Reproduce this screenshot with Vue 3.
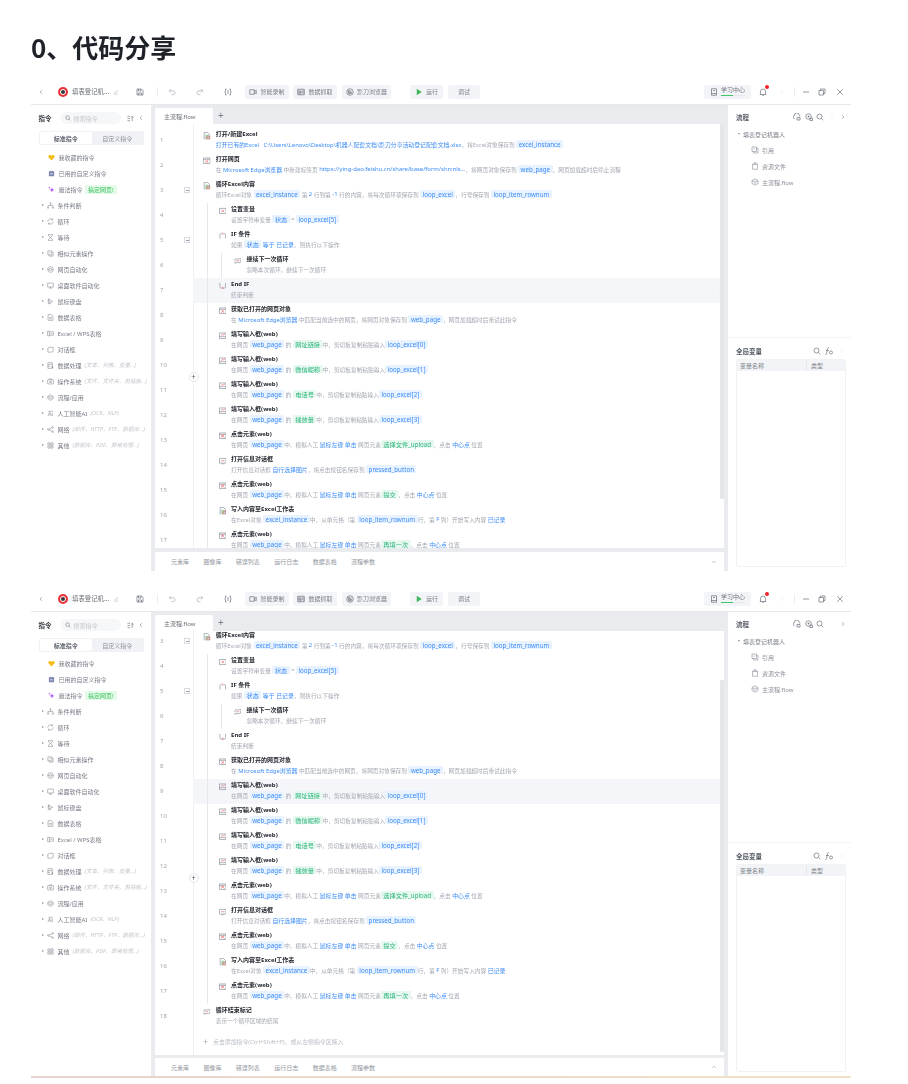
<script setup>
const v = (t) => ({ t, c: 'v' })
const s = (t) => ({ t, c: 's' })
const k = (t) => ({ t, c: 'k' })
const p = (t) => ({ t, c: 'k small' })

const fill = (key, url) => [
  '在网页 ', v('web_page'), ' 的 ', s(key), '中，剪切板复制粘贴输入', v(url),
]
const click = (el) => [
  '在网页 ', v('web_page'), '中，模拟人工 ', k('鼠标左键 单击'), ' 网页元素', s(el), '，点击 ', k('中心点'), ' 位置',
]

const rows = [
  { n: 1, lv: 0, i: 'r-xl', t: '打开/新建Excel', d: [p('打开已有的Excel   C:\\Users\\Lenovo\\Desktop\\机器人配套文档\\影刀分享活动登记配套文档.xlsx'), '，将Excel对象保存到 ', v('excel_instance')] },
  { n: 2, lv: 0, i: 'r-web', t: '打开网页', d: ['在 ', k('Microsoft Edge浏览器'), ' 中新建标签页 ', k('https://ying-dao.feishu.cn/share/base/form/shrcnls...'), '，将网页对象保存到 ', v('web_page'), '，网页加载超时后停止流程'] },
  { n: 3, lv: 0, i: 'r-xl', t: '循环Excel内容', fold: true, d: ['循环Excel对象 ', v('excel_instance'), ' 第 ', k('2'), ' 行到第 ', k('-1'), ' 行的内容，将每次循环项保存到 ', v('loop_excel'), '，行号保存到 ', v('loop_item_rownum')] },
  { n: 4, lv: 1, i: 'r-var', t: '设置变量', d: ['设置字符串变量 ', v('状态'), ' = ', v('loop_excel[5]')] },
  { n: 5, lv: 1, i: 'r-if', t: 'IF 条件', fold: true, d: ['如果 ', v('状态'), k(' 等于 已记录'), '，则执行以下操作'] },
  { n: 6, lv: 2, i: 'r-loop', t: '继续下一次循环', d: ['忽略本次循环，继续下一次循环'] },
  { n: 7, lv: 1, i: 'r-endif', t: 'End IF', d: ['结束判断'] },
  { n: 8, lv: 1, i: 'r-web', t: '获取已打开的网页对象', d: ['在 ', k('Microsoft Edge浏览器'), ' 中匹配当前选中的网页，将网页对象保存到 ', v('web_page'), '，网页加载超时后重试此指令'] },
  { n: 9, lv: 1, i: 'r-input', t: '填写输入框(web)', d: fill('网址链接', 'loop_excel[0]') },
  { n: 10, lv: 1, i: 'r-input', t: '填写输入框(web)', d: fill('微信昵称', 'loop_excel[1]') },
  { n: 11, lv: 1, i: 'r-input', t: '填写输入框(web)', d: fill('电话号', 'loop_excel[2]') },
  { n: 12, lv: 1, i: 'r-input', t: '填写输入框(web)', d: fill('播放量', 'loop_excel[3]') },
  { n: 13, lv: 1, i: 'r-click', t: '点击元素(web)', d: click('选择文件_upload') },
  { n: 14, lv: 1, i: 'r-msg', t: '打开信息对话框', d: ['打开信息对话框 ', k('自行选择图片'), '，将点击按钮名保存到 ', v('pressed_button')] },
  { n: 15, lv: 1, i: 'r-click', t: '点击元素(web)', d: click('提交') },
  { n: 16, lv: 1, i: 'r-xl', t: '写入内容至Excel工作表', d: ['在Excel对象 ', v('excel_instance'), '中，从单元格（第 ', v('loop_item_rownum'), '行，第 ', k('F'), ' 列）开始写入内容 ', k('已记录')] },
  { n: 17, lv: 1, i: 'r-click', t: '点击元素(web)', d: click('再填一次') },
  { n: 18, lv: 0, i: 'r-loop', t: '循环结束标记', d: ['表示一个循环区域的结尾'] },
]

const shots = [
  { id: 'one', rows: rows.slice(0, 17), hot: 7, add: false },
  { id: 'two', rows: rows.slice(2), hot: 9, add: true },
]

const groups = [
  { i: 's-branch', t: '条件判断' },
  { i: 's-loop', t: '循环' },
  { i: 's-wait', t: '等待' },
  { i: 's-copy', t: '相似元素操作' },
  { i: 's-globe', t: '网页自动化' },
  { i: 's-screen', t: '桌面软件自动化' },
  { i: 's-mouse', t: '鼠标键盘' },
  { i: 's-sheet', t: '数据表格' },
  { i: 's-xl', t: 'Excel / WPS表格' },
  { i: 's-dialog', t: '对话框' },
  { i: 's-data', t: '数据处理', h: '(文本、列表、变量...)' },
  { i: 's-os', t: '操作系统', h: '(文件、文件夹、剪贴板...)' },
  { i: 's-flow', t: '流程/应用' },
  { i: 's-ai', t: '人工智能AI', h: '(OCR、NLP)' },
  { i: 's-net', t: '网络', h: '(邮件、HTTP、FTP、数据库...)' },
  { i: 's-grid', t: '其他', h: '(数据库、PDF、异常处理...)' },
]
const bottomTabs = ['元素库', '图像库', '错误列表', '运行日志', '数据表格', '流程参数']
const tree = [
  { i: 's-copy', t: '引用' },
  { i: 's-file', t: '资源文件' },
  { i: 's-flow', t: '主流程.flow' },
]
</script>

<template>
  <div class="page">
    <svg class="defs" aria-hidden="true">
      <symbol id="back" viewBox="0 0 16 16"><path d="M10.5 3 5.5 8l5 5" /></symbol>
      <symbol id="next" viewBox="0 0 16 16"><path d="M5.5 3l5 5-5 5" /></symbol>
      <symbol id="edit" viewBox="0 0 16 16"><path d="M2 14h12M4 11l7-7 2 2-7 6z" /></symbol>
      <symbol id="save" viewBox="0 0 16 16"><path d="M2 2h9l3 3v9H2zM5 2v4h5V2M5 14v-4h6v4" /></symbol>
      <symbol id="undo" viewBox="0 0 16 16"><path d="M6 2 2.5 5.500 6 9M2.500 5.500H10a3.500 3.500 0 0 1 0 8H7" /></symbol>
      <symbol id="redo" viewBox="0 0 16 16"><path d="M10 2l3.500 3.500L10 9M13.500 5.500H6a3.500 3.500 0 0 0 0 8h3" /></symbol>
      <symbol id="debug" viewBox="0 0 16 16"><path d="M5 2H3v4L1.500 8 3 10v4h2M11 2h2v4l1.500 2L13 10v4h-2M6 6h4M6 10h4" /></symbol>
      <symbol id="rec" viewBox="0 0 16 16"><path d="M1.500 3.500h9v9h-9zM10.500 7l4-2.500v7l-4-2.500" /></symbol>
      <symbol id="table" viewBox="0 0 16 16"><path d="M1.500 2.500h13v11h-13zM1.500 6h13M1.500 9.700h13M6 6v7.500" /></symbol>
      <symbol id="browser" viewBox="0 0 16 16"><circle cx="8" cy="8" r="6.500" /><path d="M8 4.500a3.500 3.500 0 1 0 3.500 3.500M5 5l5 6M11 5l-5 6" /></symbol>
      <symbol id="play" viewBox="0 0 16 16"><path class="solid" d="M3.500 1.500 13.500 8l-10 6.500z" /></symbol>
      <symbol id="book" viewBox="0 0 16 16"><path d="M3 1.500h10v13H3zM6 5h4M3 11h10" /></symbol>
      <symbol id="bell" viewBox="0 0 16 16"><path d="M3 12V7a5 5 0 0 1 10 0v5l1 1H2zM6.500 15h3" /></symbol>
      <symbol id="vdots" viewBox="0 0 16 16"><path class="thick" d="M8 2v1M8 7.500v1M8 13v1" /></symbol>
      <symbol id="min" viewBox="0 0 16 16"><path d="M2 8h12" /></symbol>
      <symbol id="max" viewBox="0 0 16 16"><path d="M2 5h9v9H2zM5 5V2h9v9h-3" /></symbol>
      <symbol id="close" viewBox="0 0 16 16"><path d="M2.500 2.500l11 11M13.500 2.500l-11 11" /></symbol>
      <symbol id="search" viewBox="0 0 16 16"><circle cx="7" cy="7" r="5" /><path d="M11 11l3.500 3.500" /></symbol>
      <symbol id="sort" viewBox="0 0 16 16"><path d="M1 3h6M1 8h6M1 13h6M12 14V3M9 6l3-3 3 3" /></symbol>
      <symbol id="fx" viewBox="0 0 16 16"><path d="M1 15c3 0 2-2 3-7s1-7 4-7M2 7h6" /><circle cx="12" cy="11" r="3" /></symbol>
      <symbol id="cloud-a" viewBox="0 0 16 16"><path d="M3 11a3 3 0 0 1 0-6 4.500 4.500 0 0 1 9-1 3 3 0 0 1 2 3M8 9h6v5H8z" /></symbol>
      <symbol id="cloud-b" viewBox="0 0 16 16"><circle cx="7" cy="7" r="5.500" /><path d="M5 7h4M7 5v4M10 10h5v5h-5z" /></symbol>
      <symbol id="heart" viewBox="0 0 16 16"><path class="solid" d="M8 15 1.500 8C-.500 5 1.500 2 4.500 2 6 2 7.300 2.800 8 4c.7-1.200 2-2 3.500-2 3 0 5 3 3 6z" /></symbol>
      <symbol id="cal" viewBox="0 0 16 16"><path class="solid" d="M2 3h3V1.500h1.500V3h3V1.500H11V3h3v11.500H2zM5 8v1.500h6V8z" /></symbol>
      <symbol id="spark" viewBox="0 0 16 16"><path class="solid" d="M9 3l1.500 4.500L15 9l-4.500 1.500L9 15l-1.500-4.500L3 9l4.500-1.500zM3 1l.8 2.200L6 4l-2.200.8L3 7l-.8-2.200L0 4l2.200-.8z" /></symbol>
      <symbol id="s-branch" viewBox="0 0 16 16"><circle cx="8" cy="3" r="1.500" /><circle cx="2.500" cy="13" r="1.500" /><circle cx="13.500" cy="13" r="1.500" /><path d="M8 4.500V8H2.500v3.500M8 8h5.500v3.500" /></symbol>
      <symbol id="s-loop" viewBox="0 0 16 16"><path d="M2 8a6 6 0 0 1 10.500-4M14 8a6 6 0 0 1-10.500 4M12.500 1v3h-3M3.500 15v-3h3" /></symbol>
      <symbol id="s-wait" viewBox="0 0 16 16"><path d="M2.500 1.500h11M2.500 14.500h11M3.500 1.500v2.500L12.500 12v2.500M12.500 1.500V4L3.500 12v2.500" /></symbol>
      <symbol id="s-copy" viewBox="0 0 16 16"><path d="M2 2h9v9H2zM5 11v3h9V5h-3M5 6h3" /></symbol>
      <symbol id="s-globe" viewBox="0 0 16 16"><circle cx="8" cy="8" r="6.500" /><circle cx="8" cy="8" r="2.500" /><path d="M2 8h3.500M10.500 8H14" /></symbol>
      <symbol id="s-screen" viewBox="0 0 16 16"><path d="M1.500 2.500h13v9h-13zM5 14h6M8 11.500V14" /></symbol>
      <symbol id="s-mouse" viewBox="0 0 16 16"><path d="M3 2l10 6-4 1-2 4zM3 2v11h4" /></symbol>
      <symbol id="s-sheet" viewBox="0 0 16 16"><path d="M2.500 1.500h8l3 3v10h-11zM5 8h6M5 11h6" /></symbol>
      <symbol id="s-xl" viewBox="0 0 16 16"><path d="M1.500 2.500h4v11h-4zM5.500 4h9v8h-9M8 8h4" /></symbol>
      <symbol id="s-dialog" viewBox="0 0 16 16"><path d="M3 3h11v8a3 3 0 0 1-3 3H2V5M1.500 6h2" /></symbol>
      <symbol id="s-data" viewBox="0 0 16 16"><path d="M2 1.500h10v13H2zM2 6h10M2 10h5M10 12h5M12.500 9.500v5" /></symbol>
      <symbol id="s-os" viewBox="0 0 16 16"><path d="M1.500 4h13v9.500h-13zM5 4V2h6v2M6 8h4v2H6z" /></symbol>
      <symbol id="s-flow" viewBox="0 0 16 16"><path d="M8 1.500 14 5v6l-6 3.500L2 11V5zM2 6.500h12M5 10h6" /></symbol>
      <symbol id="s-ai" viewBox="0 0 16 16"><path d="M3 3l10 0M2 14 6 5l4 9M4 11h4M12 6v8" /></symbol>
      <symbol id="s-net" viewBox="0 0 16 16"><circle cx="3" cy="8" r="1.800" /><circle cx="13" cy="3" r="1.800" /><circle cx="13" cy="13" r="1.800" /><path d="M4.500 7 11.500 4M4.500 9l7 3" /></symbol>
      <symbol id="s-grid" viewBox="0 0 16 16"><path d="M2 2h5v5H2zM9 2h5v5H9zM2 9h5v5H2zM9 9h5v5H9z" /></symbol>
      <symbol id="s-file" viewBox="0 0 16 16"><path d="M3 5h10v9.500H3zM3 5l3-3.500h4L13 5M8 1.500V5" /></symbol>
      <symbol id="r-xl" viewBox="0 0 16 16"><path d="M2.500 1h7l4 4v10h-11z" /><path class="green" d="M6 7h5v5H6z" /><path class="red" d="M8 9h7v6H8z" /></symbol>
      <symbol id="r-web" viewBox="0 0 16 16"><path d="M1 2h14v12H1zM1 5h14" /><path class="red" d="M5 7l6 5M11 7l-6 5" /></symbol>
      <symbol id="r-var" viewBox="0 0 16 16"><path d="M1 3h14v11H1z" /><path class="red" d="M5.500 6l5 5M10.500 6l-5 5" /></symbol>
      <symbol id="r-if" viewBox="0 0 16 16"><path d="M2 14V6a3 3 0 0 1 3-3h1M14 14V6a3 3 0 0 0-3-3h-1" /><path class="red" d="M8 1v5" /></symbol>
      <symbol id="r-endif" viewBox="0 0 16 16"><path d="M2 2v8a3 3 0 0 0 3 3h6a3 3 0 0 0 3-3V2" /><path class="red" d="M8 10v5" /></symbol>
      <symbol id="r-loop" viewBox="0 0 16 16"><path d="M2 9V6a2 2 0 0 1 2-2h11l-2-2M14 7v3a2 2 0 0 1-2 2H1l2 2" /><path class="red" d="M5 8h6" /></symbol>
      <symbol id="r-input" viewBox="0 0 16 16"><path d="M1 2h14v12H1zM1 10h14" /><path class="red" d="M4 8l4-3 2 1 3-2" /></symbol>
      <symbol id="r-click" viewBox="0 0 16 16"><path d="M1 2h14v12H1zM1 5h14" /><path class="red" d="M6 7l6 5M6 7v5M6 7h5" /></symbol>
      <symbol id="r-msg" viewBox="0 0 16 16"><path d="M1 3h14v10H1z" /><path class="red" d="M4 8h8" /><path d="M5 15h6" /></symbol>
    </svg>

    <h1 class="title">0、代码分享</h1>

    <section v-for="shot in shots" :key="shot.id" class="shot" :class="shot.id">
      <header class="toolbar">
        <svg class="ic i6 t-back"><use href="#back" /></svg>
        <span class="logo t-logo"><span class="logo-eye"></span></span>
        <span class="robot t-title">填表登记机...</span>
        <svg class="ic i6 t-edit"><use href="#edit" /></svg>
        <svg class="ic t-save"><use href="#save" /></svg>
        <i class="sep t-sep1"></i>
        <svg class="ic faint t-undo"><use href="#undo" /></svg>
        <svg class="ic faint t-redo"><use href="#redo" /></svg>
        <svg class="ic t-debug"><use href="#debug" /></svg>
        <button class="tool w44 t-b1"><svg class="ic"><use href="#rec" /></svg>智能录制</button>
        <button class="tool w44 t-b2"><svg class="ic"><use href="#table" /></svg>数据抓取</button>
        <button class="tool w49 t-b3"><svg class="ic"><use href="#browser" /></svg>影刀浏览器</button>
        <button class="tool w33 t-run"><svg class="ic run"><use href="#play" /></svg>运行</button>
        <button class="tool w32 t-dbg">调试</button>
        <button class="tool learn t-learn">
          <svg class="ic"><use href="#book" /></svg>
          <span class="learn-text">学习中心<i class="learn-bar"></i></span>
        </button>
        <span class="bell t-bell"><svg class="ic"><use href="#bell" /></svg><i class="dot"></i></span>
        <svg class="ic i4 t-dots"><use href="#vdots" /></svg>
        <i class="sep t-sep2"></i>
        <svg class="ic t-min"><use href="#min" /></svg>
        <svg class="ic t-max"><use href="#max" /></svg>
        <svg class="ic t-close"><use href="#close" /></svg>
      </header>

      <div class="body">
        <aside class="side">
          <div class="side-head">
            <b>指令</b>
            <span class="search"><svg class="ic i6"><use href="#search" /></svg>搜索指令</span>
            <svg class="ic i7"><use href="#sort" /></svg>
            <svg class="ic i6"><use href="#back" /></svg>
          </div>
          <div class="segment"><span class="seg on">标准指令</span><span class="seg">自定义指令</span></div>
          <ul class="cmds">
            <li class="cmd fav"><svg class="ic yellow"><use href="#heart" /></svg>我收藏的指令</li>
            <li class="cmd fav"><svg class="ic slate"><use href="#cal" /></svg>已用的自定义指令</li>
            <li class="cmd fav"><svg class="ic purple"><use href="#spark" /></svg>魔法指令<span class="magic">搞定网页!</span></li>
            <li v-for="g in groups" :key="g.t" class="cmd">
              <i class="tri"></i>
              <svg class="ic"><use :href="'#' + g.i" /></svg>{{ g.t }}<em v-if="g.h">{{ g.h }}</em>
            </li>
          </ul>
        </aside>

        <main class="center">
          <div class="tabs">
            <span class="tab">主流程.flow</span>
            <span class="plus">+</span>
          </div>
          <div class="editor">
            <div class="list">
              <div
                v-for="r in shot.rows"
                :key="r.n"
                class="row"
                :class="['lv' + r.lv, { hot: r.n === shot.hot }]"
              >
                <div class="gutter">
                  <span class="num">{{ r.n }}</span>
                  <span v-if="r.fold" class="fold"></span>
                </div>
                <div class="cell">
                  <svg class="ic rowic"><use :href="'#' + r.i" /></svg>
                  <div class="txt">
                    <div class="name">{{ r.t }}</div>
                    <div class="desc">
                      <template v-for="(part, i) in r.d" :key="i">
                        <span v-if="typeof part === 'string'">{{ part }}</span>
                        <span v-else :class="part.c">{{ part.t }}</span>
                      </template>
                    </div>
                  </div>
                  <svg v-if="r.n === shot.hot" class="ic i6 more"><use href="#vdots" /></svg>
                </div>
              </div>
              <div v-if="shot.add" class="addrow"><span class="addplus">+</span>点击添加指令(Ctrl+Shift+P)，或从左侧指令区拖入</div>
            </div>
            <div class="scroll"><i class="thumb"></i></div>
            <span class="insert">+</span>
          </div>
          <div class="bottom">
            <span v-for="b in bottomTabs" :key="b">{{ b }}</span>
            <svg class="ic i6 up"><use href="#back" /></svg>
          </div>
        </main>

        <aside class="right">
          <div class="flow">
            <div class="rhead">
              <b>流程</b>
              <svg class="ic"><use href="#cloud-a" /></svg>
              <svg class="ic"><use href="#cloud-b" /></svg>
              <svg class="ic"><use href="#search" /></svg>
              <svg class="ic i4"><use href="#vdots" /></svg>
              <svg class="ic i6"><use href="#next" /></svg>
            </div>
            <div class="root"><i class="tri down"></i>填表登记机器人</div>
            <div v-for="n in tree" :key="n.t" class="leaf"><svg class="ic"><use :href="'#' + n.i" /></svg>{{ n.t }}</div>
          </div>
          <div class="vars">
            <div class="rhead">
              <b>全局变量</b>
              <svg class="ic"><use href="#search" /></svg>
              <svg class="ic"><use href="#fx" /></svg>
              <svg class="ic i4"><use href="#vdots" /></svg>
            </div>
            <div class="vtable">
              <div class="vhead"><span class="vname">变量名称</span><span class="vtype">类型</span></div>
            </div>
          </div>
        </aside>
      </div>
    </section>
  </div>
</template>

<style scoped>
.page { width: 908px; height: 1084px; overflow: hidden; background: #fff; font-family: "Noto Sans", "Noto Sans CJK SC", sans-serif; color: #4a4f5a; }
.defs { position: absolute; width: 0; height: 0; }
.title { margin: 0; padding: 32px 0 0 31px; height: 48px; font-size: 26px; line-height: 30px; font-weight: 700; color: #1f2329; font-family: "Noto Sans CJK SC", sans-serif; filter: blur(.5px); }
.shot { margin-left: 31px; width: 820px; display: flex; flex-direction: column; font-size: 6px; filter: blur(.42px); }
.shot.one { height: 491px; }
.shot.two { height: 489px; margin-top: 16px; border-bottom: 2px solid; border-image: linear-gradient(90deg, #e8d2cf, #efe2c6) 1; box-sizing: content-box; }

.ic { width: 8px; height: 8px; flex: none; fill: none; stroke: #5f6570; stroke-width: 1.3; }
.i4 { width: 4px; height: 8px; }
.i6 { width: 6px; height: 6px; }
.i7 { width: 7px; height: 7px; }
:deep(.solid) { fill: currentColor; stroke: none; }
:deep(.thick) { stroke-width: 2; }
:deep(.red) { stroke: #e8555a; }
:deep(.green) { stroke: #3cbf6a; }
.faint { stroke: #a4a9b2; }

.toolbar { height: 25px; flex: none; display: flex; align-items: center; border-bottom: 1px solid #e6e8ec; box-sizing: border-box; padding-bottom: 1px; }
.t-back { margin-left: 7px; }
.t-logo { margin-left: 14px; }
.logo { width: 10px; height: 10px; border-radius: 50%; background: #e8333c; display: flex; align-items: center; justify-content: center; flex: none; }
.logo-eye { width: 6px; height: 6px; border-radius: 50%; background: #33363d; border: 1px solid #fff; box-sizing: border-box; }
.robot { margin-left: 4px; width: 39px; font-size: 6.4px; white-space: nowrap; color: #6b7078; flex: none; }
.t-edit { margin-left: 2px; stroke: #b6bac2; }
.t-save { margin-left: 17px; }
.sep { width: 1px; height: 10px; background: #eceef1; flex: none; }
.t-sep1 { margin-left: 13px; }
.t-undo { margin-left: 10px; }
.t-redo { margin-left: 20px; }
.t-debug { margin-left: 20px; }
.tool { height: 14px; flex: none; padding: 0; border: 0; border-radius: 2px; background: #f3f4f7; font: inherit; font-size: 6px; color: #7a7f88; display: flex; align-items: center; justify-content: center; gap: 3px; }
.w44 { width: 44px; }
.w49 { width: 49px; }
.w33 { width: 33px; }
.w32 { width: 32px; }
.t-b1 { margin-left: 13px; }
.t-b2 { margin-left: 4px; }
.t-b3 { margin-left: 5px; }
.t-run { margin-left: 19px; }
.t-dbg { margin-left: 5px; }
.run { color: #43b55c; stroke: none; }
.learn { margin-left: 224px; width: 47px; color: #6f7580; }
.learn-text { display: flex; flex-direction: column; line-height: 7px; margin-top: -1px; gap: 1px; }
.learn-bar { height: 1px; width: 24px; background: linear-gradient(90deg, #3fc566 50%, #e6e8ec 50%); display: block; }
.bell { margin-left: 8px; display: flex; position: relative; flex: none; }
.dot { position: absolute; top: -3px; right: -2px; width: 4px; height: 4px; border-radius: 50%; background: #f5222d; }
.t-dots { margin-left: 13px; }
.t-sep2 { margin-left: 10px; }
.t-min { margin-left: 7px; }
.t-max { margin-left: 8px; }
.t-close { margin-left: 10px; }

.body { flex: 1; min-height: 0; display: flex; }
.side { width: 120px; flex: none; box-sizing: border-box; }
.side-head { height: 26px; display: flex; align-items: center; padding-left: 7.500px; }
.side-head b { font-size: 6.500px; color: #2f333b; width: 14px; }
.search { margin-left: 7px; width: 61px; height: 12px; border-radius: 6px; background: #f6f7f9; display: flex; align-items: center; gap: 3px; padding-left: 5px; box-sizing: border-box; color: #c3c6cc; margin-right: 6px; }
.side-head .i6 { margin-left: 4px; }
.search .i6 { margin-left: 0; }
.segment { margin-left: 8px; width: 105px; height: 14px; background: #f1f2f5; border-radius: 2px; display: flex; padding: 1px; box-sizing: border-box; }
.seg { width: 52px; display: flex; align-items: center; justify-content: center; color: #8b9099; border-radius: 2px; }
.seg.on { background: #fff; color: #5c616b; font-weight: 600; }
.cmds { list-style: none; margin: 4px 0 0; padding: 0; }
.two .cmds { margin-top: 3px; }
.cmd { height: 16px; display: flex; align-items: center; padding-left: 10.500px; color: #777c86; white-space: nowrap; }
.cmd .ic { width: 7px; height: 7px; margin-left: 3.500px; margin-right: 3.500px; stroke: #868b95; }
.fav { padding-left: 17px; }
.cmd.fav .ic { margin-left: 0; margin-right: 3.500px; stroke: none; }
.yellow { color: #f6bd16; }
.slate { color: #7b87b0; }
.purple { color: #a94bf5; }
.tri { width: 0; height: 0; border-left: 2px solid #8d929b; border-top: 1.500px solid transparent; border-bottom: 1.500px solid transparent; flex: none; }
.cmd em { margin-left: 3px; color: #c2c5cb; font-size: 5.500px; }
.magic { margin-left: 2.500px; height: 9px; padding: 0 3px; background: #e5fbe9; color: #3cc05d; border-radius: 1px; display: flex; align-items: center; }

.center { width: 577px; flex: none; display: flex; flex-direction: column; background: #e9ebef; padding: 0 4px; box-sizing: border-box; }
.tabs { height: 19px; flex: none; display: flex; align-items: flex-end; }
.tab { width: 58px; height: 16px; background: #fff; border-radius: 2px 2px 0 0; display: flex; align-items: center; padding-left: 9px; box-sizing: border-box; color: #6b7078; font-size: 6px; }
.plus { margin-left: 5px; align-self: center; font-size: 10px; line-height: 10px; color: #7a7f88; }
.editor { height: 424px; flex: none; display: flex; background: #fff; overflow: hidden; position: relative; }
.list { flex: 1; min-width: 0; display: flex; flex-direction: column; background: linear-gradient(#eef0f3, #eef0f3) 38px 0 / 1px 100% no-repeat; }
.one .list { padding-top: 4px; }
.two .list { margin-top: -2px; }
.row { height: 25px; flex: none; display: flex; }
.row.hot .cell { background-color: #f5f6fa; }
.gutter { width: 38px; flex: none; display: flex; align-items: center; padding: 0 3px 1px 5px; box-sizing: border-box; color: #a0a5ae; }
.num { font-size: 6px; }
.fold { margin-left: auto; width: 6px; height: 6px; border: 1px solid #d9dbe0; box-sizing: border-box; background: linear-gradient(#9a9ea6, #9a9ea6) center / 3px 1px no-repeat; }
.cell { flex: 1; min-width: 0; display: flex; align-items: flex-start; white-space: nowrap; }
.lv0 .cell { padding-left: 10.300px; }
.lv1 .cell { padding-left: 25.600px; background: linear-gradient(#e6e8ec, #e6e8ec) 13.500px 0 / 1px 100% no-repeat; }
.lv2 .cell { padding-left: 41px; background: linear-gradient(#e6e8ec, #e6e8ec) 13.500px 0 / 1px 100% no-repeat, linear-gradient(#e6e8ec, #e6e8ec) 28px 0 / 1px 100% no-repeat; }
.rowic { margin-top: 4px; margin-right: 5px; width: 7.500px; height: 7.500px; stroke: #7f8590; }
.txt { flex: 1; min-width: 0; }
.name { height: 9px; margin-top: 2px; line-height: 9px; font-size: 6px; font-weight: 700; color: #22262d; }
.desc { height: 10px; display: flex; align-items: center; font-size: 5.700px; color: #a3a8b1; white-space: pre; }
.v, .s { height: 8.500px; padding: 0 2.500px; border-radius: 1.500px; display: inline-flex; align-items: center; font-size: 6.200px; }
.v { background: #e9f3ff; color: #3c8cf5; }
.s { background: #e6f8ef; color: #2fb67e; }
.k { color: #3c8cf5; font-size: 5.900px; }
.k.small { font-size: 5.860px; }
.more { margin-top: 9px; margin-right: 5px; stroke: #c3c6cc; }
.addrow { height: 14px; margin-top: 5px; margin-left: 48px; display: flex; align-items: center; color: #b8bcc4; font-size: 5.900px; flex: none; }
.addplus { font-size: 9px; width: 10px; color: #a3a8b1; line-height: 9px; }
.scroll { width: 4px; flex: none; background: #fff; }
.thumb { display: block; background: #e4e6ea; width: 4px; border-radius: 1px; }
.one .thumb { height: 375px; }
.two .thumb { height: 372px; margin-top: 49px; }
.insert { position: absolute; left: 33.500px; width: 10px; height: 10px; border-radius: 50%; background: #fff; border: 1px solid #e3e5e9; box-sizing: border-box; display: flex; align-items: center; justify-content: center; font-size: 8px; line-height: 8px; color: #5c616b; }
.one .insert { top: 248px; }
.two .insert { top: 242px; }
.bottom { flex: 1; margin-top: 3px; min-height: 0; background: #fff; display: flex; align-items: center; gap: 14.400px; padding-left: 16px; color: #9296a0; position: relative; }
.one .bottom { margin-top: 4px; }
.up { margin-left: auto; margin-right: 7px; transform: rotate(90deg); stroke: #9296a0; }

.right { flex: 1; min-width: 0; display: flex; flex-direction: column; background: #fff; }
.flow { flex: 1; min-height: 0; padding: 5px 0 0 8px; border-bottom: 1px solid #f3f4f6; }
.rhead { height: 14px; display: flex; align-items: center; color: #555a64; }
.rhead b { margin-right: auto; font-size: 6.500px; font-weight: 600; }
.flow .rhead { gap: 3.500px; padding-right: 5px; }
.flow .rhead .i4 { margin: 0 2.500px; }
.root { height: 16px; margin-top: 2px; display: flex; align-items: center; gap: 3px; color: #7a7f88; }
.tri.down { border-left: 1.500px solid transparent; border-right: 1.500px solid transparent; border-top: 2px solid #8d929b; border-bottom: 0; margin-left: 2px; }
.leaf { height: 16px; display: flex; align-items: center; padding-left: 15px; gap: 3px; color: #8b9099; }
.leaf .ic { stroke: #9296a0; }
.vars { height: 233px; flex: none; padding: 6px 5px 4px 8px; box-sizing: border-box; display: flex; flex-direction: column; }
.vars .rhead { gap: 4.600px; padding-right: 2px; }
.vars .rhead .i4 { margin-left: 2px; }
.vtable { margin-top: 1px; flex: 1; border: 1px solid #f1f2f4; border-radius: 2px; box-sizing: border-box; }
.vhead { height: 11px; background: #f3f4f7; display: flex; align-items: center; color: #7f848d; }
.vname { width: 70px; padding-left: 3px; box-sizing: border-box; border-right: 1px solid #e4e6ea; }
.vtype { padding-left: 4px; }
</style>
